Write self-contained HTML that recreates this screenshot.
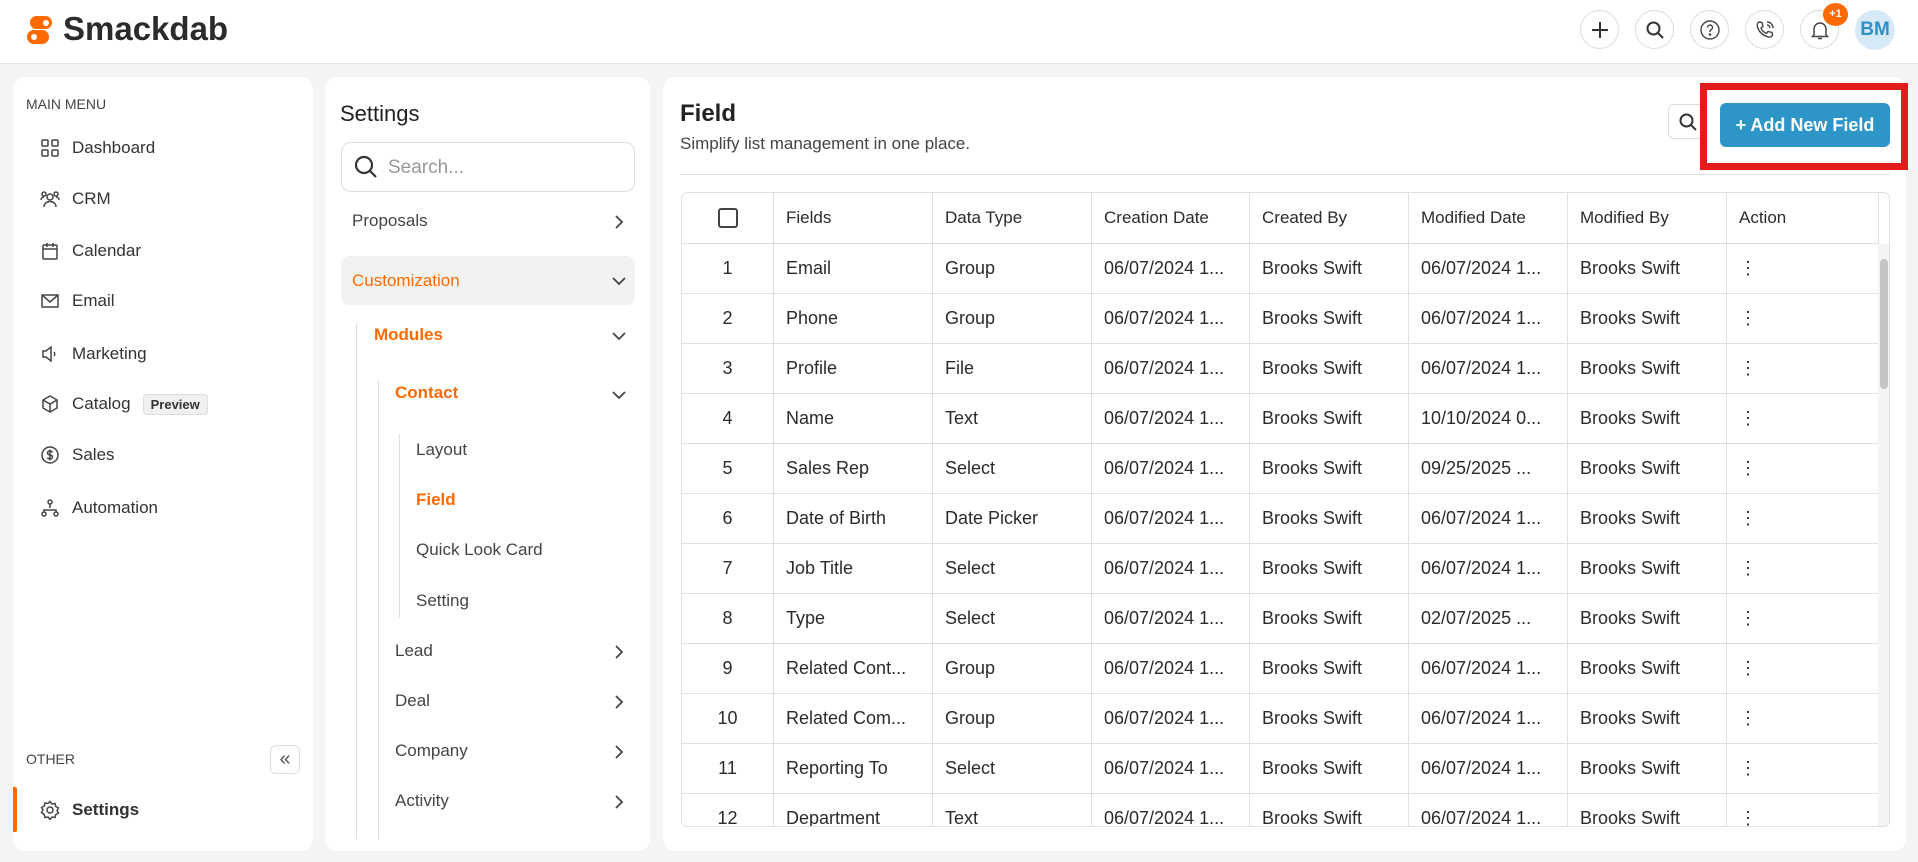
<!DOCTYPE html>
<html><head><meta charset="utf-8"><style>
*{box-sizing:border-box;margin:0;padding:0}
body{width:1918px;height:862px;background:#f4f4f4;font-family:"Liberation Sans",sans-serif;color:#2b2b2b;position:relative;overflow:hidden}
.abs{position:absolute}
.hdr{left:0;top:0;width:1918px;height:64px;background:#fff;border-bottom:1px solid #e2e2e2}
.panel{background:#fff;border-radius:12px;position:absolute;top:77px;height:774px}
.circ{position:absolute;top:10px;width:39px;height:39px;border:1px solid #dcdcdc;border-radius:50%;display:flex;align-items:center;justify-content:center}
.mi{position:absolute;left:40px;font-size:17px;color:#333;display:flex;align-items:center;gap:12px;height:24px}
.mi svg{width:20px;height:20px;fill:none;stroke:#444;stroke-width:1.5}
.si{position:absolute;font-size:17px;color:#444}
.chev{position:absolute;left:610px;width:18px;height:18px;fill:none;stroke:#444;stroke-width:1.8}
table{border-collapse:collapse;font-size:18px;color:#2b2b2b;table-layout:fixed}
td,th{border:1px solid #e0e0e0;height:50px;padding:0 12px;white-space:nowrap;overflow:hidden;text-align:left}
th{font-weight:500;font-size:17px;height:51px}
td:first-child,th:first-child{text-align:center}
</style></head><body>
<div class="abs hdr"></div>
<svg class="abs" style="left:24px;top:15px" width="32" height="32" viewBox="0 0 32 32"><rect x="6" y="1" width="22" height="13" rx="6.5" fill="#ff6a00"/><rect x="3" y="15" width="22" height="14" rx="7" fill="#ff6a00"/><circle cx="22" cy="8" r="3" fill="#fff"/><circle cx="10" cy="22" r="3" fill="#fff"/></svg>
<div class="abs" style="left:63px;top:10px;font-size:33px;font-weight:bold;color:#2b2b2b">Smackdab</div>
<div class="circ" style="left:1580px"><svg width="20" height="20" viewBox="0 0 20 20" stroke="#333" stroke-width="2"><path d="M10 2v16M2 10h16"/></svg></div>
<div class="circ" style="left:1635px"><svg width="20" height="20" viewBox="0 0 20 20" fill="none" stroke="#333" stroke-width="2"><circle cx="8.5" cy="8.5" r="6"/><path d="M13 13l5 5"/></svg></div>
<div class="circ" style="left:1690px"><svg width="22" height="22" viewBox="0 0 22 22" fill="none" stroke="#444" stroke-width="1.4"><circle cx="11" cy="11" r="9"/><path d="M8.5 8.5a2.5 2.5 0 1 1 3.5 2.3c-.7.3-1 .8-1 1.5v.7"/><circle cx="11" cy="15.5" r=".6" fill="#444"/></svg></div>
<div class="circ" style="left:1745px"><svg width="22" height="22" viewBox="0 0 22 22" fill="none" stroke="#444" stroke-width="1.4"><path d="M5 3l3 .5 1 4-2 1.5c1 2.5 3 4.5 5.5 5.5l1.5-2 4 1 .5 3c-1 1.5-3 2-5 1.2C8 16 5 13 3.5 8 2.8 6 3.5 4 5 3z"/><path d="M13 3a6 6 0 0 1 6 6M13 6a3 3 0 0 1 3 3"/></svg></div>
<div class="circ" style="left:1800px"><svg width="22" height="22" viewBox="0 0 22 22" fill="none" stroke="#444" stroke-width="1.5"><path d="M5 16V10a6 6 0 0 1 12 0v6l1.5 1.5h-15z"/><path d="M9 19.5h4"/></svg></div>
<div class="abs" style="left:1823px;top:3px;width:25px;height:23px;border-radius:50%;background:#ff6a00;color:#fff;font-size:11px;font-weight:bold;text-align:center;line-height:23px">+1</div>
<div class="abs" style="left:1855px;top:10px;width:40px;height:40px;border-radius:50%;background:#d6e9f6;color:#2f8fc6;font-size:19px;font-weight:bold;text-align:center;line-height:40px">BM</div>

<div class="panel" style="left:13px;width:300px"></div>
<div class="abs" style="left:26px;top:96px;font-size:14px;color:#444">MAIN MENU</div>
<div class="mi" style="top:136px"><svg viewBox="0 0 20 20"><rect x="2" y="2" width="6" height="6" rx="1"/><rect x="12" y="2" width="6" height="6" rx="1"/><rect x="2" y="12" width="6" height="6" rx="1"/><rect x="12" y="12" width="6" height="6" rx="1"/></svg>Dashboard</div>
<div class="mi" style="top:187px"><svg viewBox="0 0 20 20"><circle cx="10" cy="8" r="3"/><path d="M4 18c0-3.5 3-5.5 6-5.5s6 2 6 5.5"/><circle cx="4" cy="5" r="2"/><circle cx="16" cy="5" r="2"/><path d="M1 11c0-2 1.5-3 3-3M19 11c0-2-1.5-3-3-3"/></svg>CRM</div>
<div class="mi" style="top:239px"><svg viewBox="0 0 20 20"><rect x="3" y="4" width="14" height="14" rx="1"/><path d="M3 8h14M7 2v4M13 2v4"/></svg>Calendar</div>
<div class="mi" style="top:289px"><svg viewBox="0 0 20 20"><rect x="2" y="4" width="16" height="12"/><path d="M2 4l8 7 8-7"/></svg>Email</div>
<div class="mi" style="top:342px"><svg viewBox="0 0 20 20"><path d="M3 7h3l5-4v14l-5-4H3z"/><path d="M14 8c1 1 1 3 0 4"/></svg>Marketing</div>
<div class="mi" style="top:392px"><svg viewBox="0 0 20 20"><path d="M10 2l7 4v8l-7 4-7-4V6z"/><path d="M3 6l7 4 7-4M10 10v8"/></svg>Catalog<span style="font-size:13px;background:#f0f0f0;border:1px solid #ddd;border-radius:4px;padding:2px 7px;font-weight:600">Preview</span></div>
<div class="mi" style="top:443px"><svg viewBox="0 0 20 20"><circle cx="10" cy="10" r="8"/><path d="M12.5 7.5c-.5-1-1.5-1.5-2.5-1.5-1.5 0-2.5.8-2.5 2s1 1.7 2.5 2 2.5.8 2.5 2-1 2-2.5 2c-1 0-2-.5-2.5-1.5M10 4.5v11"/></svg>Sales</div>
<div class="mi" style="top:496px"><svg viewBox="0 0 20 20"><circle cx="10" cy="4" r="2"/><circle cx="4" cy="16" r="2"/><circle cx="16" cy="16" r="2"/><path d="M10 6v4M4 14v-2h12v2"/></svg>Automation</div>
<div class="abs" style="left:26px;top:751px;font-size:14px;color:#444">OTHER</div>
<div class="abs" style="left:270px;top:745px;width:30px;height:29px;border:1px solid #ddd;border-radius:6px;text-align:center;line-height:26px;color:#555;font-size:20px">«</div>
<div class="abs" style="left:13px;top:787px;width:4px;height:45px;background:#ff6a00;border-radius:0 2px 2px 0"></div>
<div class="mi" style="top:798px;font-weight:600"><svg viewBox="0 0 20 20"><circle cx="10" cy="10" r="3"/><path d="M10 1.5l2 2.5 3-.5.8 3 2.7 1.5-1.5 2.5 1.5 2.5-2.7 1.5-.8 3-3-.5-2 2.5-2-2.5-3 .5-.8-3L1.5 12.5 3 10 1.5 7.5 4.2 6 5 3l3 .5z"/></svg>Settings</div>

<div class="panel" style="left:325px;width:325px"></div>
<div class="abs" style="left:340px;top:101px;font-size:22px;color:#222;font-weight:500">Settings</div>
<div class="abs" style="left:341px;top:142px;width:294px;height:50px;border:1px solid #ddd;border-radius:10px"></div>
<svg class="abs" style="left:353px;top:154px" width="26" height="26" viewBox="0 0 26 26" fill="none" stroke="#333" stroke-width="2.2"><circle cx="11" cy="11" r="8"/><path d="M17 17l6 6"/></svg>
<div class="abs" style="left:388px;top:157px;font-size:19px;color:#999">Search...</div>
<div class="si" style="left:352px;top:211px">Proposals</div>
<svg class="chev" style="top:213px" viewBox="0 0 18 18"><path d="M6 3l6 6-6 6"/></svg>
<div class="abs" style="left:341px;top:256px;width:294px;height:49px;background:#f2f2f2;border-radius:8px"></div>
<div class="si" style="left:352px;top:271px;color:#ff6a00;font-weight:500">Customization</div>
<svg class="chev" style="top:272px" viewBox="0 0 18 18"><path d="M3 6l6 6 6-6"/></svg>
<div class="abs" style="left:356px;top:323px;width:1px;height:516px;background:#ddd"></div>
<div class="si" style="left:374px;top:325px;color:#ff6a00;font-weight:600">Modules</div>
<svg class="chev" style="top:327px" viewBox="0 0 18 18"><path d="M3 6l6 6 6-6"/></svg>
<div class="abs" style="left:378px;top:380px;width:1px;height:459px;background:#ddd"></div>
<div class="si" style="left:395px;top:383px;color:#ff6a00;font-weight:600">Contact</div>
<svg class="chev" style="top:386px" viewBox="0 0 18 18"><path d="M3 6l6 6 6-6"/></svg>
<div class="abs" style="left:399px;top:434px;width:1px;height:184px;background:#ddd"></div>
<div class="si" style="left:416px;top:440px">Layout</div>
<div class="si" style="left:416px;top:490px;color:#ff6a00;font-weight:600">Field</div>
<div class="si" style="left:416px;top:540px">Quick Look Card</div>
<div class="si" style="left:416px;top:591px">Setting</div>
<div class="si" style="left:395px;top:641px">Lead</div><svg class="chev" style="top:643px" viewBox="0 0 18 18"><path d="M6 3l6 6-6 6"/></svg>
<div class="si" style="left:395px;top:691px">Deal</div><svg class="chev" style="top:693px" viewBox="0 0 18 18"><path d="M6 3l6 6-6 6"/></svg>
<div class="si" style="left:395px;top:741px">Company</div><svg class="chev" style="top:743px" viewBox="0 0 18 18"><path d="M6 3l6 6-6 6"/></svg>
<div class="si" style="left:395px;top:791px">Activity</div><svg class="chev" style="top:793px" viewBox="0 0 18 18"><path d="M6 3l6 6-6 6"/></svg>

<div class="panel" style="left:663px;width:1243px"></div>
<div class="abs" style="left:680px;top:100px;font-size:24px;font-weight:600;color:#222">Field</div>
<div class="abs" style="left:680px;top:134px;font-size:17px;color:#444">Simplify list management in one place.</div>
<div class="abs" style="left:1668px;top:104px;width:42px;height:35px;border:1px solid #ddd;border-radius:6px"></div>
<svg class="abs" style="left:1678px;top:112px" width="20" height="20" viewBox="0 0 20 20" fill="none" stroke="#333" stroke-width="2"><circle cx="8.5" cy="8.5" r="6"/><path d="M13 13l5 5"/></svg>
<div class="abs" style="left:1700px;top:83px;width:208px;height:87px;border:7px solid #e21b1b;background:#fff"></div>
<div class="abs" style="left:1720px;top:103px;width:170px;height:44px;background:#2e95c9;border-radius:6px;color:#fff;font-size:18px;font-weight:bold;text-align:center;line-height:44px">+ Add New Field</div>
<div class="abs" style="left:680px;top:174px;width:1210px;height:1px;background:#e2e2e2"></div>
<div class="abs" style="left:681px;top:192px;width:1209px;height:635px;border:1px solid #e0e0e0;border-radius:6px;overflow:hidden">
<table style="width:1197px;margin:-1px 0 0 -1px">
<colgroup><col style="width:92px"><col style="width:159px"><col style="width:159px"><col style="width:158px"><col style="width:159px"><col style="width:159px"><col style="width:159px"><col style="width:152px"></colgroup>
<tr><th><span style="display:inline-block;width:20px;height:20px;border:2px solid #444;border-radius:3px;vertical-align:middle"></span></th><th>Fields</th><th>Data Type</th><th>Creation Date</th><th>Created By</th><th>Modified Date</th><th>Modified By</th><th>Action</th></tr>
<tr><td>1</td><td>Email</td><td>Group</td><td>06/07/2024 1...</td><td>Brooks Swift</td><td>06/07/2024 1...</td><td>Brooks Swift</td><td>⋮</td></tr>
<tr><td>2</td><td>Phone</td><td>Group</td><td>06/07/2024 1...</td><td>Brooks Swift</td><td>06/07/2024 1...</td><td>Brooks Swift</td><td>⋮</td></tr>
<tr><td>3</td><td>Profile</td><td>File</td><td>06/07/2024 1...</td><td>Brooks Swift</td><td>06/07/2024 1...</td><td>Brooks Swift</td><td>⋮</td></tr>
<tr><td>4</td><td>Name</td><td>Text</td><td>06/07/2024 1...</td><td>Brooks Swift</td><td>10/10/2024 0...</td><td>Brooks Swift</td><td>⋮</td></tr>
<tr><td>5</td><td>Sales Rep</td><td>Select</td><td>06/07/2024 1...</td><td>Brooks Swift</td><td>09/25/2025 ...</td><td>Brooks Swift</td><td>⋮</td></tr>
<tr><td>6</td><td>Date of Birth</td><td>Date Picker</td><td>06/07/2024 1...</td><td>Brooks Swift</td><td>06/07/2024 1...</td><td>Brooks Swift</td><td>⋮</td></tr>
<tr><td>7</td><td>Job Title</td><td>Select</td><td>06/07/2024 1...</td><td>Brooks Swift</td><td>06/07/2024 1...</td><td>Brooks Swift</td><td>⋮</td></tr>
<tr><td>8</td><td>Type</td><td>Select</td><td>06/07/2024 1...</td><td>Brooks Swift</td><td>02/07/2025 ...</td><td>Brooks Swift</td><td>⋮</td></tr>
<tr><td>9</td><td>Related Cont...</td><td>Group</td><td>06/07/2024 1...</td><td>Brooks Swift</td><td>06/07/2024 1...</td><td>Brooks Swift</td><td>⋮</td></tr>
<tr><td>10</td><td>Related Com...</td><td>Group</td><td>06/07/2024 1...</td><td>Brooks Swift</td><td>06/07/2024 1...</td><td>Brooks Swift</td><td>⋮</td></tr>
<tr><td>11</td><td>Reporting To</td><td>Select</td><td>06/07/2024 1...</td><td>Brooks Swift</td><td>06/07/2024 1...</td><td>Brooks Swift</td><td>⋮</td></tr>
<tr><td>12</td><td>Department</td><td>Text</td><td>06/07/2024 1...</td><td>Brooks Swift</td><td>06/07/2024 1...</td><td>Brooks Swift</td><td>⋮</td></tr>
</table>
<div class="abs" style="left:1196px;top:51px;width:12px;height:584px;background:#f4f4f4"></div>
<div class="abs" style="left:1198px;top:66px;width:8px;height:130px;background:#c4c4c4;border-radius:4px"></div>
</div>
</body></html>
